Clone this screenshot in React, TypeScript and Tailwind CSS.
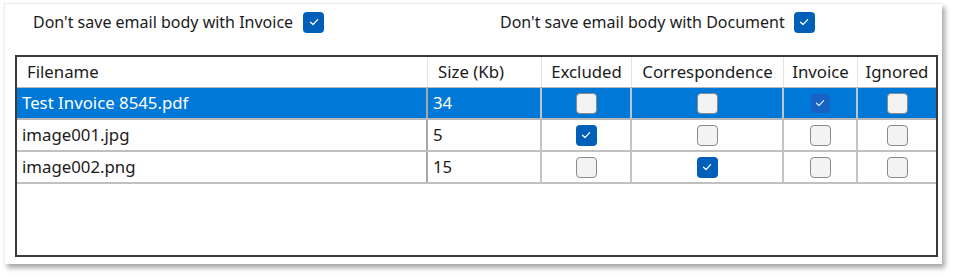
import React from "react";

const font = { fontFamily: '"Noto Sans", "Open Sans", Arial, sans-serif' };

function Check({ checked, dim, small }: { checked?: boolean; dim?: boolean; small?: boolean }) {
  if (checked) {
    return (
      <div
        className={
          (small ? "w-[19px] h-[19px] " : "w-[21px] h-[21px] ") +
          (dim ? "bg-[#1762c2] " : "bg-[#005fb8] ") +
          "rounded-[4px] flex items-center justify-center"
        }
      >
        <svg width="12" height="12" viewBox="0 0 12 12">
          <path
            d="M2.5 6.3 L5 8.6 L9.6 3.6"
            fill="none"
            stroke={dim ? "#d6e4f7" : "#ffffff"}
            strokeWidth="1.3"
            strokeLinecap="round"
            strokeLinejoin="round"
          />
        </svg>
      </div>
    );
  }
  return <div className="w-[21px] h-[21px] rounded-[4px] border-[1.5px] border-[#8a8a8a] bg-[#f3f3f3]" />;
}

const cols = ["w-[411px]", "w-[114px]", "w-[90px]", "w-[152px]", "w-[74px]", "w-[78px]"];

type Row = { name: string; size: string; flags: boolean[]; selected?: boolean };

const rows: Row[] = [
  { name: "Test Invoice 8545.pdf", size: "34", flags: [false, false, true, false], selected: true },
  { name: "image001.jpg", size: "5", flags: [true, false, false, false] },
  { name: "image002.png", size: "15", flags: [false, true, false, false] },
];

export default function App() {
  return (
    <div className="w-[957px] h-[279px] bg-white pt-[3px] pl-[4px]" style={font}>
      <div className="w-[938px] h-[261px] bg-white border-l border-t border-[#ececec] shadow-[3px_4px_5px_rgba(0,0,0,0.35)] flex flex-col">
        <div className="h-[51px] flex items-start pt-[6px] text-[16px] text-[#1b1b1b]">
          <div className="flex items-center gap-[10px] ml-[28px] w-[467px]">
            <span>Don't save email body with Invoice</span>
            <Check checked />
          </div>
          <div className="flex items-center gap-[9px]">
            <span>Don't save email body with Document</span>
            <Check checked />
          </div>
        </div>
        <div className="ml-[10px] w-[923px] h-[202px] border-2 border-[#3a3a3a] bg-white text-[16.8px] text-[#1b1b1b]">
          <div className="flex h-[31px] border-b border-[#b8b8b8]">
            {["Filename", "Size (Kb)", "Excluded", "Correspondence", "Invoice", "Ignored"].map((h, i) => (
              <div
                key={h}
                className={
                  cols[i] +
                  " flex items-center border-r border-[#e3e3e3] last:border-r-0 " +
                  (i < 2 ? "pl-[10px]" : "justify-center")
                }
              >
                {h}
              </div>
            ))}
          </div>
          {rows.map((r) => (
            <div
              key={r.name}
              className={
                "flex h-[32px] border-b-2 " +
                (r.selected ? "bg-[#0078d7] text-white border-[#b8b8b8]" : "bg-white border-[#c0c0c0]")
              }
            >
              <div className={cols[0] + " flex items-center pl-[5px] border-r-2 border-[#a8a8a8]"}>{r.name}</div>
              <div className={cols[1] + " flex items-center pl-[5px] border-r-2 border-[#c4c4c4]"}>{r.size}</div>
              {r.flags.map((f, i) => (
                <div
                  key={i}
                  className={
                    cols[i + 2] +
                    " flex items-center justify-center " +
                    (i < 3 ? "border-r-2 border-[#c4c4c4]" : "")
                  }
                >
                  <Check checked={f} dim={r.selected && f} small={r.selected && f} />
                </div>
              ))}
            </div>
          ))}
        </div>
      </div>
    </div>
  );
}
